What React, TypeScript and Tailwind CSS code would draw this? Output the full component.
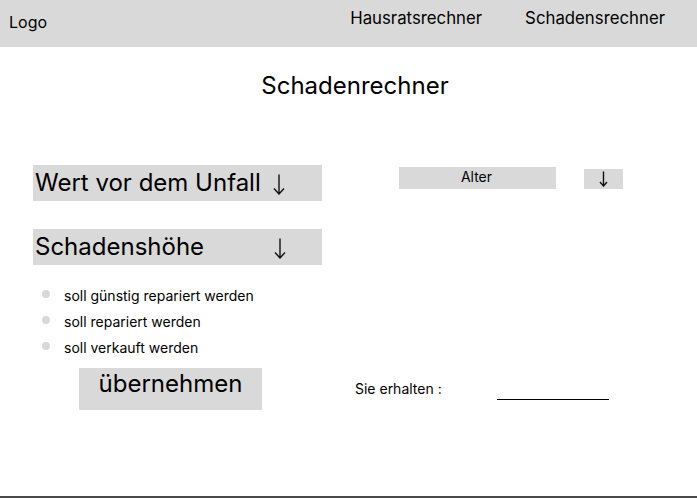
import React from 'react';

const font = { fontFamily: 'Inter, "Noto Sans", sans-serif' };

function Radio({ label }: { label: string }) {
  return (
    <li className="flex items-center h-[26px]">
      <span className="w-[8px] h-[8px] rounded-full bg-[#d9d9d9] ml-[9px] mr-[14px] -mt-[4px]" />
      <span className="text-[14px] leading-[20px] text-black">{label}</span>
    </li>
  );
}

// thin down arrow, drawn like the wireframe glyph
function ArrowDown({ w, h, className = '' }: { w: number; h: number; className?: string }) {
  return (
    <svg width={w} height={h} viewBox={`0 0 ${w} ${h}`} className={className} fill="none">
      <path
        d={`M${w / 2} 0.5 V${h - 1} M1 ${h - w / 2 - 0.5} L${w / 2} ${h - 1} L${w - 1} ${h - w / 2 - 0.5}`}
        stroke="#111"
        strokeWidth="1.4"
      />
    </svg>
  );
}

export default function App() {
  return (
    <div className="w-[697px] h-[498px] bg-white flex flex-col text-black" style={font}>
      {/* Header */}
      <header className="h-[47px] bg-[#d9d9d9] flex items-start shrink-0">
        <div className="pl-[9px] pt-[12px] text-[16px] leading-[20px]">Logo</div>
        <nav className="ml-auto flex pt-[8px] pr-[32px] gap-[43px] text-[16.8px] leading-[20px]">
          <a>Hausratsrechner</a>
          <a>Schadensrechner</a>
        </nav>
      </header>

      {/* Title */}
      <h1 className="text-center text-[24px] leading-[32px] mt-[23px] pl-[13px]">Schadenrechner</h1>

      {/* Content */}
      <main className="flex mt-[63px] flex-1">
        <section className="w-[322px] pl-[33px] flex flex-col">
          <div className="h-[36px] bg-[#d9d9d9] flex items-center pl-[2px] text-[24px] leading-[32px]">
            <span>Wert vor dem Unfall</span>
            <ArrowDown w={12} h={21} className="ml-[12px] mt-[3px]" />
          </div>
          <div className="h-[36px] mt-[28px] bg-[#d9d9d9] flex items-center pl-[2px] text-[24px] leading-[32px]">
            <span>Schadenshöhe</span>
            <ArrowDown w={12} h={21} className="ml-[70px] mt-[3px]" />
          </div>
          <ul className="mt-[18px] flex flex-col">
            <Radio label="soll günstig repariert werden" />
            <Radio label="soll repariert werden" />
            <Radio label="soll verkauft werden" />
          </ul>
          <button className="mt-[7px] ml-[46px] w-[183px] h-[42px] bg-[#d9d9d9] flex justify-center text-[24px] leading-[32px]">
            übernehmen
          </button>
        </section>

        <section className="flex-1 flex flex-col pl-[77px]">
          <div className="flex items-start mt-[2px]">
            <div className="w-[157px] h-[22px] bg-[#d9d9d9] flex justify-center text-[14px] leading-[20px] pr-[2px]">
              Alter
            </div>
            <div className="ml-[28px] mt-[2px] w-[39px] h-[20px] bg-[#d9d9d9] flex justify-center items-start pt-[2px]">
              <ArrowDown w={9} h={16} className="mr-[1px]" />
            </div>
          </div>
          <div className="mt-auto mb-[97px] flex items-end -ml-[44px]">
            <span className="text-[14px] leading-[20px]">Sie erhalten :</span>
            <span className="ml-[55px] mb-[-1px] w-[112px] border-b border-black" />
          </div>
        </section>
      </main>

      <div className="h-[2px] bg-[#4a4a4a] shrink-0" />
    </div>
  );
}
